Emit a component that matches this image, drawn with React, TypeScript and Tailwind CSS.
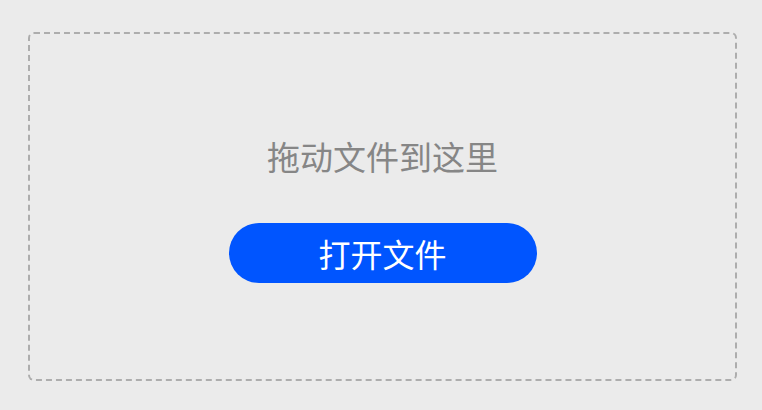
export default function App() {
  return (
    <div
      className="w-[762px] h-[410px] bg-[#ebebeb] pt-[32px] pl-[28px] pr-[25px]"
      style={{ fontFamily: '"Noto Sans CJK SC", "Noto Sans", sans-serif' }}
    >
      {/* Drop zone */}
      <div className="h-[349px] rounded-md border-2 border-dashed border-[#adadad] flex flex-col items-center justify-center pt-[4px]">
        <p className="text-[33px] leading-[44px] text-[#868686]">拖动文件到这里</p>
        <button className="mt-[45px] w-[308px] h-[60px] rounded-full bg-[#0055ff] text-white text-[32px] leading-none">
          打开文件
        </button>
      </div>
    </div>
  );
}
